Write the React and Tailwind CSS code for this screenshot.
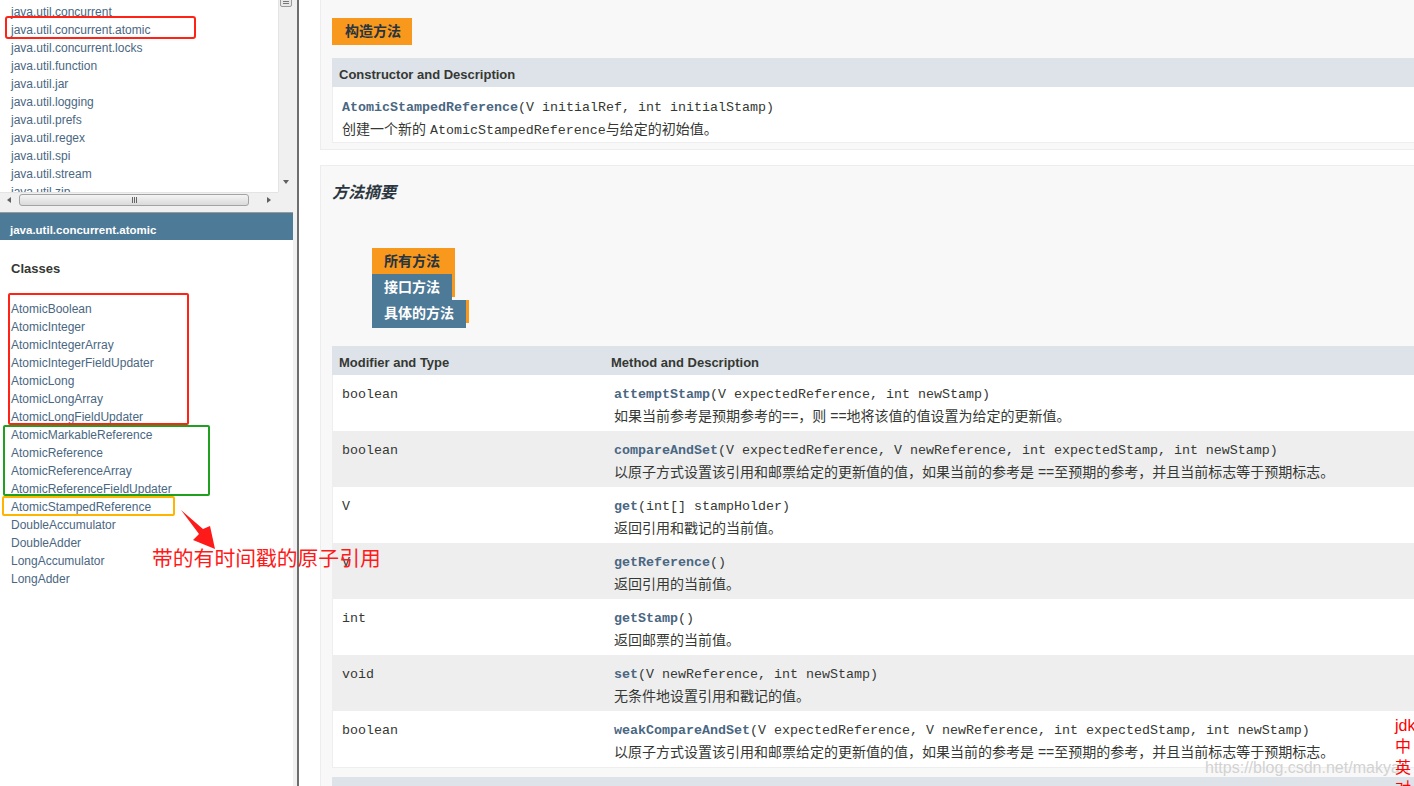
import React from 'react';

const packages = [
  'java.util.concurrent',
  'java.util.concurrent.atomic',
  'java.util.concurrent.locks',
  'java.util.function',
  'java.util.jar',
  'java.util.logging',
  'java.util.prefs',
  'java.util.regex',
  'java.util.spi',
  'java.util.stream',
  'java.util.zip',
];

const classes = [
  'AtomicBoolean',
  'AtomicInteger',
  'AtomicIntegerArray',
  'AtomicIntegerFieldUpdater',
  'AtomicLong',
  'AtomicLongArray',
  'AtomicLongFieldUpdater',
  'AtomicMarkableReference',
  'AtomicReference',
  'AtomicReferenceArray',
  'AtomicReferenceFieldUpdater',
  'AtomicStampedReference',
  'DoubleAccumulator',
  'DoubleAdder',
  'LongAccumulator',
  'LongAdder',
];

const casDesc = '以原子方式设置该引用和邮票给定的更新值的值，如果当前的参考是 ==至预期的参考，并且当前标志等于预期标志。';

const methods = [
  { type: 'boolean', name: 'attemptStamp', args: '(V expectedReference, int newStamp)', desc: '如果当前参考是预期参考的==，则 ==地将该值的值设置为给定的更新值。' },
  { type: 'boolean', name: 'compareAndSet', args: '(V expectedReference, V newReference, int expectedStamp, int newStamp)', desc: casDesc },
  { type: 'V', name: 'get', args: '(int[] stampHolder)', desc: '返回引用和戳记的当前值。' },
  { type: 'V', name: 'getReference', args: '()', desc: '返回引用的当前值。' },
  { type: 'int', name: 'getStamp', args: '()', desc: '返回邮票的当前值。' },
  { type: 'void', name: 'set', args: '(V newReference, int newStamp)', desc: '无条件地设置引用和戳记的值。' },
  { type: 'boolean', name: 'weakCompareAndSet', args: '(V expectedReference, V newReference, int expectedStamp, int newStamp)', desc: casDesc },
];

const mono = "font-['Liberation_Mono','Courier_New',monospace] text-[13.33px]";
const cjk = "font-['Liberation_Sans','Noto_Sans_CJK_SC',sans-serif]";

const PackageFrame = () => (
  <div className="h-[207px] flex flex-col">
    <div className="h-[192px] flex">
      {/* package list */}
      <div className="relative flex-1 bg-white overflow-hidden pl-[11px] pt-[3px]">
        {packages.map((p) => (
          <div key={p} className="text-[12px] leading-[18px] text-[#4a6782]">{p}</div>
        ))}
        <div className="absolute left-[5px] top-[16px] w-[191px] h-[23px] border-2 border-[#ff2215] rounded-[3px]" />
      </div>
      {/* vertical scrollbar */}
      <div className="relative w-[15px] bg-[#f0f0f0] border-l border-[#e4e4e4]">
        <div className="absolute left-[1px] top-[-8px] w-[12px] h-[15px] rounded-[2px] border border-[#9a9a9a] bg-[#e8e8e8] flex flex-col items-center justify-end gap-[1px] pb-[2px]">
          <div className="w-[6px] h-px bg-[#777]" />
          <div className="w-[6px] h-px bg-[#777]" />
        </div>
        <div className="absolute left-[4px] top-[180px] w-0 h-0 border-l-[3.5px] border-r-[3.5px] border-t-[4px] border-l-transparent border-r-transparent border-t-[#606060]" />
      </div>
    </div>
    {/* horizontal scrollbar */}
    <div className="h-[15px] flex">
      <div className="relative w-[278px] bg-[#f0f0f0] border-t border-[#e4e4e4]">
        <div className="absolute left-[7px] top-[4px] w-0 h-0 border-t-[3.5px] border-b-[3.5px] border-r-[4px] border-t-transparent border-b-transparent border-r-[#606060]" />
        <div className="absolute left-[19px] top-[1px] w-[230px] h-[12px] rounded-[3px] border border-[#a3a3a3] bg-gradient-to-b from-[#f4f4f4] to-[#dadada] flex items-center justify-center gap-[1px]">
          <div className="w-px h-[6px] bg-[#666]" />
          <div className="w-px h-[6px] bg-[#666]" />
          <div className="w-px h-[6px] bg-[#666]" />
        </div>
        <div className="absolute left-[267px] top-[4px] w-0 h-0 border-t-[3.5px] border-b-[3.5px] border-l-[4px] border-t-transparent border-b-transparent border-l-[#606060]" />
      </div>
      <div className="w-[15px] bg-[#f0f0f0]" />
    </div>
  </div>
);

const ClassFrame = () => (
  <div className="relative flex-1 bg-white pl-[11px] pt-[20px]">
    <div className="text-[13px] leading-[18px] font-bold text-[#353833]">Classes</div>
    <div className="mt-[22px]">
      {classes.map((c) => (
        <div key={c} className="text-[12px] leading-[18px] text-[#4a6782]">{c}</div>
      ))}
    </div>
    <div className="absolute left-[8px] top-[53px] w-[181px] h-[132px] border-2 border-[#ff2215] rounded-[2px]" />
    <div className="absolute left-[3px] top-[185px] w-[207px] h-[71px] border-2 border-[#1fa01f] rounded-[2px]" />
    <div className="absolute left-[2px] top-[256px] w-[173px] h-[20px] border-2 border-[#ffb400] rounded-[2px]" />
  </div>
);

const TableHeader = ({ cols }) => (
  <div className="h-[29px] bg-[#dee3e9] grid grid-cols-[272px_1fr] text-[13px] font-bold text-[#353833] leading-[16px] pt-[9px]">
    {cols.map((c) => (
      <div key={c} className="pl-[7px]">{c}</div>
    ))}
  </div>
);

const MethodRow = ({ m, odd }) => (
  <div className={`h-[56px] grid grid-cols-[272px_1fr] border-x border-[#eeeeee] ${odd ? 'bg-[#eeeeef]' : 'bg-white'}`}>
    <div className={`pl-[9px] pt-[9px] leading-[21px] text-[#353833] ${mono}`}>{m.type}</div>
    <div className="pl-[9px] pt-[9px]">
      <div className={`leading-[21px] whitespace-nowrap text-[#353833] ${mono}`}>
        <span className="font-bold text-[#4a6782]">{m.name}</span>{m.args}
      </div>
      <div className={`leading-[22px] whitespace-nowrap text-[14px] text-[#353833] ${cjk}`}>{m.desc}</div>
    </div>
  </div>
);

export default function App() {
  return (
    <div className="relative w-[1414px] h-[786px] overflow-hidden flex bg-white font-['Liberation_Sans',Arial,'Noto_Sans_CJK_SC',sans-serif]">
      {/* left frames */}
      <div className="w-[293px] shrink-0 flex flex-col">
        <PackageFrame />
        <div className="h-[6px] bg-[#f0f0f0] border-b border-[#9a9a9a]" />
        <div className="h-[27px] bg-[#4d7a97] pl-[10px] pt-[10px] leading-[14px] text-[11.5px] font-bold text-white">
          java.util.concurrent.atomic
        </div>
        <ClassFrame />
      </div>
      <div className="w-[4px] shrink-0 bg-[#f0f0f0]" />
      <div className="w-[2px] shrink-0 bg-[#6e6e6e]" />

      {/* right content */}
      <div className="flex-1 overflow-hidden bg-white pl-[21px]">
        <div className="w-[1200px]">
          {/* constructor summary */}
          <div className="h-[150px] bg-[#f8f8f8] border-l border-b border-[#ededed] pl-[11px] pt-[18px]">
            <div className={`w-[80px] h-[27px] bg-[#f8981d] pl-[13px] leading-[27px] text-[14px] font-bold text-[#253441] ${cjk}`}>构造方法</div>
            <div className="mt-[13px]">
              <TableHeader cols={['Constructor and Description']} />
              <div className="h-[56px] bg-white border-x border-b border-[#eeeeee] pl-[9px] pt-[10px]">
                <div className={`leading-[21px] text-[#353833] ${mono}`}>
                  <span className="font-bold text-[#4a6782]">AtomicStampedReference</span>(V initialRef, int initialStamp)
                </div>
                <div className={`leading-[22px] text-[14px] text-[#353833] ${cjk}`}>
                  创建一个新的 <span className={mono}>AtomicStampedReference</span>与给定的初始值。
                </div>
              </div>
            </div>
          </div>

          {/* method summary */}
          <div className="mt-[15px] bg-[#f8f8f8] border-l border-t border-[#ededed] pl-[11px] pt-[17px] pb-[20px]">
            <div className={`text-[16px] leading-[20px] italic font-bold text-[#2c3640] ${cjk}`}>方法摘要</div>
            <div className={`mt-[45px] ml-[40px] flex flex-col text-[14px] font-bold ${cjk}`}>
              <div className="w-[83px] h-[26px] bg-[#f8981d] pl-[12px] leading-[26px] text-[#253441]">所有方法</div>
              <div className="flex">
                <div className="w-[80px] h-[26px] bg-[#4d7a97] pl-[12px] leading-[26px] text-white">接口方法</div>
                <div className="w-[3px] h-[23px] bg-[#f8981d]" />
              </div>
              <div className="flex">
                <div className="w-[94px] h-[28px] bg-[#4d7a97] pl-[12px] leading-[27px] text-white">具体的方法</div>
                <div className="w-[3px] h-[23px] bg-[#f8981d]" />
              </div>
            </div>
            <div className="mt-[18px]">
              <TableHeader cols={['Modifier and Type', 'Method and Description']} />
              <div className="border-b border-[#eeeeee]">
                {methods.map((m, i) => (
                  <MethodRow key={m.name} m={m} odd={i % 2 === 1} />
                ))}
              </div>
              <div className="mt-[9px] h-[30px] bg-[#dee3e9]" />
            </div>
          </div>
        </div>
      </div>

      {/* annotation arrow */}
      <svg className="absolute left-0 top-0 pointer-events-none" width="1414" height="786">
        <polygon points="181,510 203,529 210,526 215,549 193,540 199,534" fill="#ff1a1a" />
      </svg>
      <div className={`absolute left-[152px] top-[546px] text-[20.8px] leading-[26px] text-[#ff1a1a] whitespace-nowrap ${cjk}`}>
        带的有时间戳的原子引用
      </div>

      {/* watermark */}
      <div className="absolute left-[1205px] top-[758px] text-[16px] leading-[20px] text-[#d2d2d2] whitespace-nowrap">
        https://blog.csdn.net/makyan
      </div>
      <div className={`absolute left-[1395px] top-[715px] text-[16px] leading-[21px] text-[#ff0000] ${cjk}`}>
        <div>jdk</div>
        <div>中</div>
        <div>英</div>
        <div>对</div>
      </div>
    </div>
  );
}
